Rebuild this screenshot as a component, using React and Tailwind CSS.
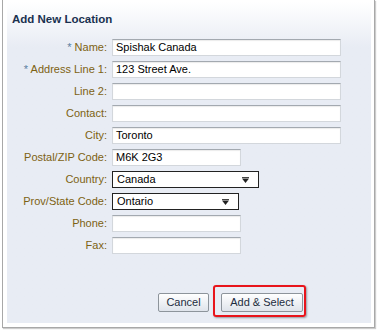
import React from "react";

const font = { fontFamily: '"Liberation Sans", Arial, sans-serif' };

function Label({ req, children }) {
  return (
    <div className="w-[100px] pr-[5px] text-right text-[11px] leading-[17px] text-[#7d6212] whitespace-nowrap">
      {req && <span className="text-[#5b7ea0]">* </span>}
      {children}
    </div>
  );
}

function TextInput({ w, value }) {
  return (
    <div
      className={`${w} h-[17px] bg-white border border-[#d3d7dc] border-t-[#a3a9b0] shadow-[inset_0_1px_1px_rgba(0,0,0,0.08)] pl-[3px] text-[11px] leading-[15px] text-black`}
    >
      {value}
    </div>
  );
}

function Select({ w, value }) {
  return (
    <div
      className={`${w} h-[17px] bg-white border border-[#222] pl-[4px] pr-[9px] flex items-center justify-between text-[11px] text-black`}
    >
      <span className="leading-[15px]">{value}</span>
      <svg width="7" height="6" viewBox="0 0 7 6">
        <rect x="0" y="0" width="7" height="1" fill="#444" />
        <path d="M0 1.5 L7 1.5 L3.5 6 Z" fill="#222" />
      </svg>
    </div>
  );
}

function Row({ label, req, children }) {
  return (
    <div className="flex items-center h-[17px]">
      <div className="w-[5px]" />
      <Label req={req}>{label}</Label>
      {children}
    </div>
  );
}

function Button({ children, w }) {
  return (
    <div
      className={`${w} h-[19px] rounded-[2px] border border-[#8d949b] bg-gradient-to-b from-white to-[#dfe4eb] flex items-center justify-center text-[11px] text-[#1d2c40]`}
    >
      {children}
    </div>
  );
}

export default function App() {
  return (
    <div className="w-[377px] h-[331px] bg-white" style={font}>
      <div className="ml-[2px] w-[373px] h-[328px] border-x border-b border-[#a8a8a8] shadow-[1px_1px_1px_rgba(0,0,0,0.2)] pl-[4px] pr-[3px] pt-[2px] pb-[5px] bg-white">
        <div className="h-[321px] bg-gradient-to-b from-white to-[#e8ecf4] to-[14%] bg-[#e8ecf4] flex flex-col">
          <div className="pl-[5px] pt-[10px] h-[37px] text-[11.5px] font-bold text-[#1a3150] leading-[14px]">
            Add New Location
          </div>
          <div className="flex flex-col gap-[5px]">
            <Row label="Name:" req>
              <TextInput w="w-[229px]" value="Spishak Canada" />
            </Row>
            <Row label="Address Line 1:" req>
              <TextInput w="w-[229px]" value="123 Street Ave." />
            </Row>
            <Row label="Line 2:">
              <TextInput w="w-[229px]" value="" />
            </Row>
            <Row label="Contact:">
              <TextInput w="w-[229px]" value="" />
            </Row>
            <Row label="City:">
              <TextInput w="w-[229px]" value="Toronto" />
            </Row>
            <Row label="Postal/ZIP Code:">
              <TextInput w="w-[129px]" value="M6K 2G3" />
            </Row>
            <Row label="Country:">
              <Select w="w-[147px]" value="Canada" />
            </Row>
            <Row label="Prov/State Code:">
              <Select w="w-[127px]" value="Ontario" />
            </Row>
            <Row label="Phone:">
              <TextInput w="w-[129px]" value="" />
            </Row>
            <Row label="Fax:">
              <TextInput w="w-[129px]" value="" />
            </Row>
          </div>
          <div className="flex mt-[39px] pl-[151px] gap-[12px]">
            <Button w="w-[51px]">Cancel</Button>
            <div className="relative">
              <Button w="w-[82px]">Add &amp; Select</Button>
              <div className="absolute left-[-8px] top-[-8px] w-[93px] h-[32px] border-2 border-[#e8141b] rounded-[3px] shadow-[1px_1px_2px_rgba(0,0,0,0.35)]" />
            </div>
          </div>
        </div>
      </div>
    </div>
  );
}
